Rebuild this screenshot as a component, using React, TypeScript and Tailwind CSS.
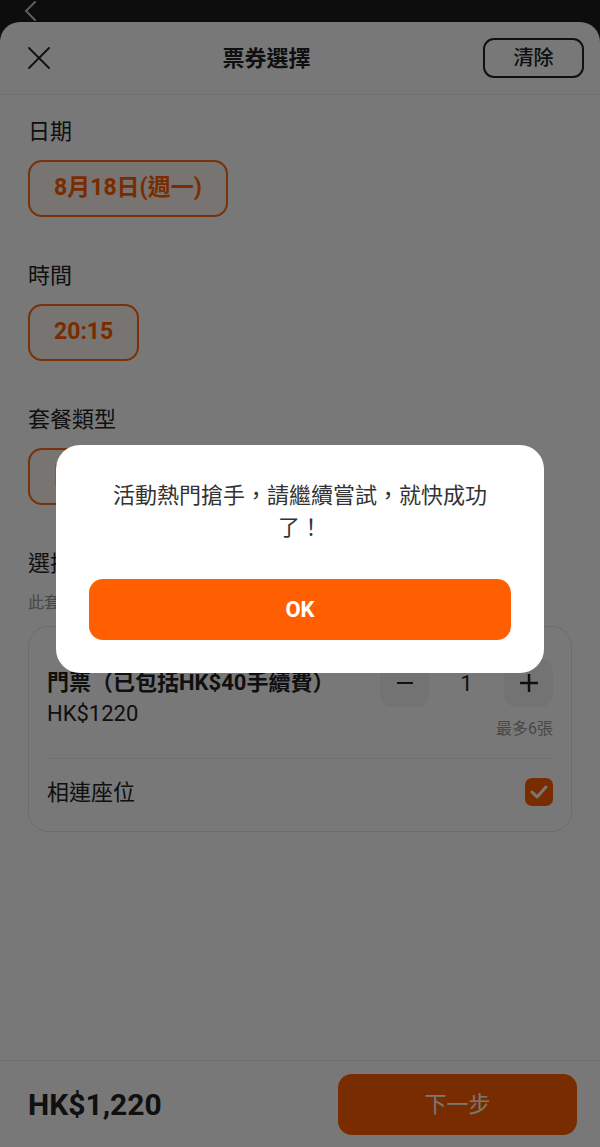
import React from "react";

function CloseIcon() {
  return (
    <svg width="22" height="22" viewBox="0 0 22 22" fill="none" stroke="#222" strokeWidth="1.8" strokeLinecap="round">
      <line x1="1" y1="1" x2="21" y2="21" />
      <line x1="21" y1="1" x2="1" y2="21" />
    </svg>
  );
}

function Chip({ label }: { label: string }) {
  return (
    <div className="inline-flex h-[57px] items-center rounded-[14px] border-2 border-[#ff6a13] bg-[#fff6f0] px-[24px] text-[23px] font-bold text-[#ff5f00]">
      {label}
    </div>
  );
}

export default function App() {
  return (
    <div className="relative flex h-[1147px] w-[600px] flex-col overflow-hidden bg-[#1c1c1c] font-['Roboto','Noto_Sans_CJK_TC',sans-serif] text-[#222]">
      {/* status strip behind the sheet */}
      <div className="h-[22px] shrink-0 overflow-hidden pl-[24px]">
        <svg width="12" height="22" viewBox="0 0 12 22" fill="none" stroke="#c8c8c8" strokeWidth="2" strokeLinecap="round" className="-mt-[1px]">
          <polyline points="11,3 2,12 11,21" />
        </svg>
      </div>

      {/* ticket sheet */}
      <div className="flex flex-1 flex-col rounded-t-[20px] bg-white">
        <header className="flex h-[73px] shrink-0 items-center border-b border-[#ececec] pl-[28px] pr-[16px]">
          <CloseIcon />
          <h1 className="flex-1 text-center text-[22px] font-bold">票券選擇</h1>
          <button className="flex h-[40px] w-[101px] items-center justify-center rounded-[11px] border-2 border-[#222] text-[20px] font-medium">
            清除
          </button>
        </header>

        <div className="flex flex-col px-[28px] pt-[23px]">
          <p className="text-[22px] leading-[28px]">日期</p>
          <div className="mt-[14px]"><Chip label="8月18日(週一)" /></div>

          <p className="mt-[45px] text-[22px] leading-[28px]">時間</p>
          <div className="mt-[14px]"><Chip label="20:15" /></div>

          <p className="mt-[45px] text-[22px] leading-[28px]">套餐類型</p>
          <div className="mt-[14px]"><Chip label="門票（已包括HK$40手續費）" /></div>

          <p className="mt-[45px] text-[22px] leading-[28px]">選擇數量</p>
          <p className="mt-[14px] text-[16px] leading-[22px] text-[#999]">此套餐每張訂單最多可購買6張門票</p>

          <div className="mt-[12px] rounded-[20px] border border-[#e6e6e6] px-[18px] pt-[32px] pb-[6px]">
            <div className="flex justify-between">
              <div className="mt-[10px]">
                <p className="text-[22px] font-bold leading-[28px]">門票（已包括HK$40手續費）</p>
                <p className="mt-[3px] text-[22px] leading-[28px]">HK$1220</p>
              </div>
              <div className="flex flex-col items-end">
                <div className="flex items-center">
                  <button className="flex h-[48px] w-[49px] items-center justify-center rounded-[12px] bg-[#f5f5f5]">
                    <span className="block h-[2.5px] w-[16px] bg-[#222]" />
                  </button>
                  <span className="w-[75px] text-center text-[22px]">1</span>
                  <button className="flex h-[48px] w-[49px] items-center justify-center rounded-[12px] bg-[#f5f5f5]">
                    <svg width="18" height="18" viewBox="0 0 18 18" stroke="#222" strokeWidth="2.5">
                      <line x1="9" y1="0" x2="9" y2="18" />
                      <line x1="0" y1="9" x2="18" y2="9" />
                    </svg>
                  </button>
                </div>
                <span className="mt-[11px] text-[16px] leading-[22px] text-[#999]">最多6張</span>
              </div>
            </div>
            <div className="mt-[18px] border-t border-[#ececec]" />
            <div className="flex h-[66px] items-center justify-between">
              <span className="text-[22px]">相連座位</span>
              <span className="flex h-[28px] w-[28px] items-center justify-center rounded-[7px] bg-[#ff5f00]">
                <svg width="18" height="14" viewBox="0 0 18 14" fill="none" stroke="#fff" strokeWidth="3" strokeLinecap="round" strokeLinejoin="round">
                  <polyline points="2,7 7,12 16,2" />
                </svg>
              </span>
            </div>
          </div>
        </div>

        <div className="flex-1" />

        <footer className="flex h-[87px] shrink-0 items-center justify-between border-t border-[#ececec] pl-[28px] pr-[23px]">
          <span className="text-[30px] font-bold">HK$1,220</span>
          <button className="flex h-[61px] w-[239px] items-center justify-center rounded-[14px] bg-[#ff5f00] text-[22px] text-white">
            下一步
          </button>
        </footer>
      </div>

      {/* dimmed backdrop + alert */}
      <div className="absolute inset-0 flex justify-center bg-black/[0.53] pt-[445px]">
        <div className="flex h-[228px] w-[488px] flex-col items-center rounded-[24px] bg-white px-[33px] pt-[35px]">
          <p className="px-[15px] text-center text-[22px] leading-[32px] text-[#333]">
            活動熱門搶手，請繼續嘗試，就快成功了！
          </p>
          <button className="mt-[35px] flex h-[61px] w-full items-center justify-center rounded-[14px] bg-[#ff5f00] text-[22px] font-bold text-white">
            OK
          </button>
        </div>
      </div>
    </div>
  );
}
